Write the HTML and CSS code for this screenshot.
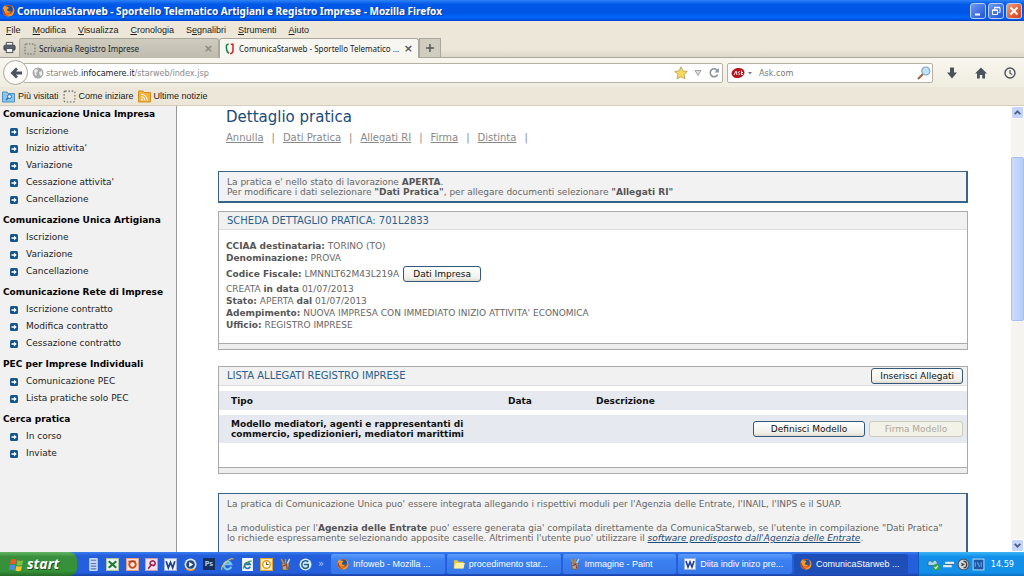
FILE: index.html
```html
<!DOCTYPE html>
<html lang="it">
<head>
<meta charset="utf-8">
<title>ComunicaStarweb - Sportello Telematico Artigiani e Registro Imprese</title>
<link rel="stylesheet" href="styles.css">
</head>
<body>
<svg class="defs" aria-hidden="true">
  <symbol id="fox" viewBox="0 0 16 16"><circle cx="8" cy="8" r="7" fill="#e8641b"/><circle cx="8.500" cy="6.500" r="4.600" fill="#24509e"/><path d="M1 5C2 3 3 2 3.500 1.500L5 3.500C7 3 8 4 8.500 5L6.500 6.500C6 8.500 8 10 11 8.500C10 11.500 6 12 4 9.500C5 14 12 14.500 14 9C14.500 6 13 3 11.500 2C16 4 16.500 10 13 13.500C9 17 2 15 1 10Z" fill="#f79a25"/><path d="M2 6C3 11 5 14 9 14.500C4 15.500 .5 12 1 7Z" fill="#c83a12"/></symbol>
  <symbol id="dots" viewBox="0 0 12 12"><rect x="1" y="1" width="10" height="10" rx="1" fill="none" stroke="#666" stroke-dasharray="1.500 1.500"/></symbol>
  <symbol id="arrow" viewBox="0 0 8 8"><rect width="8" height="8" rx="1.500" fill="#12558f"/><path d="M1.500 3.200H4V1.500L6.700 4L4 6.500V4.800H1.500Z" fill="#fff"/></symbol>
  <symbol id="paint" viewBox="0 0 12 14"><path d="M2 6H10L9 13H3Z" fill="#b9a58a" stroke="#5c4a33" stroke-width=".6"/><path d="M4 6L1.500 1M6 6V1" stroke="#c98b2c" stroke-width="1.600"/><path d="M8 6L10.500 1" stroke="#d9d9d9" stroke-width="1.600"/><path d="M3 9L7 7L8 12" stroke="#8c3526" stroke-width="1.200" fill="none"/></symbol>
  <symbol id="word" viewBox="0 0 12 12"><rect x=".5" y=".5" width="11" height="11" fill="#f4f7ff" stroke="#9db2dc"/><path d="M2 3L4 9L6 4L8 9L10 3" fill="none" stroke="#1f3f94" stroke-width="1.600"/></symbol>
</svg>

<header class="browser">
  <div class="titlebar">
    <svg class="i13"><use href="#fox"/></svg>
    <h1>ComunicaStarweb - Sportello Telematico Artigiani e Registro Imprese - Mozilla Firefox</h1>
    <button class="win" aria-label="Riduci a icona"><svg viewBox="0 0 14 14"><path d="M4 10.500H9" stroke="#fff" stroke-width="2"/></svg></button>
    <button class="win" aria-label="Ripristina"><svg viewBox="0 0 14 14" fill="none" stroke="#fff"><path d="M5.500 5V3.500H11V8.500H9.500"/><path d="M3.500 6H8.500V10.500H3.500Z"/><path d="M5.500 3.500H11M3.500 6.200H8.500" stroke-width="1.500"/></svg></button>
    <button class="win close" aria-label="Chiudi"><svg viewBox="0 0 14 14"><path d="M3.500 3.500L10.500 10.500M10.500 3.500L3.500 10.500" stroke="#fff" stroke-width="1.800"/></svg></button>
  </div>

  <nav class="menubar" aria-label="Menu">
    <button><u>F</u>ile</button><button><u>M</u>odifica</button><button><u>V</u>isualizza</button><button><u>C</u>ronologia</button><button>S<u>e</u>gnalibri</button><button><u>S</u>trumenti</button><button><u>A</u>iuto</button>
  </nav>

  <div class="tabs">
    <button class="print" aria-label="Stampa"><svg viewBox="0 0 14 13"><path d="M3.500 4V1H10.500V4" fill="#f5f5f5" stroke="#444b55"/><rect x="1" y="4" width="12" height="5.500" rx="1.500" fill="#59616c" stroke="#363d46"/><rect x="3.500" y="7.500" width="7" height="4.500" fill="#f5f5f5" stroke="#444b55"/></svg></button>
    <div class="tab">
      <svg class="i12"><use href="#dots"/></svg><span class="tab-name">Scrivania Registro Imprese</span>
      <button class="x" aria-label="Chiudi scheda">×</button>
    </div>
    <div class="tab current">
      <svg class="i12" viewBox="0 0 12 14"><path d="M4.500 1.500C1.500 1 1.500 4 2 7C2.300 10 3.500 11.500 5 12" fill="none" stroke="#16834b" stroke-width="1.800"/><path d="M7 1.500H9.500V8C9.500 11 8 12.500 6 12.500" fill="none" stroke="#d8232e" stroke-width="1.800"/></svg><span class="tab-name">ComunicaStarweb - Sportello Telematico ...</span>
      <button class="x" aria-label="Chiudi scheda">×</button>
    </div>
    <button class="newtab" aria-label="Nuova scheda"><svg viewBox="0 0 10 10"><path d="M5 1V9M1 5H9" stroke="#555" stroke-width="1.500"/></svg></button>
  </div>

  <div class="navbar">
    <button class="back" aria-label="Indietro"><svg viewBox="0 0 14 14"><path d="M7 1.500L1.500 7L7 12.500L9 10.500L7 8.500H13V5.500H7L9 3.500Z" fill="#4a525e"/></svg></button>
    <div class="field url">
      <svg class="i12" viewBox="0 0 12 12"><circle cx="6" cy="6" r="5.500" fill="#a9a9a9"/><path d="M2 3L5 2L6 4L4 6L5 9L3 8ZM7 5L10 4L10 8L8 9Z" fill="#eee"/></svg>
      <label for="address">starweb.<b>infocamere.it</b>/starweb/index.jsp</label>
      <input id="address" type="text">
      <button aria-label="Segnalibro"><svg class="i14" viewBox="0 0 14 14"><path d="M7 .8L8.900 4.900L13.300 5.400L10 8.400L10.900 12.900L7 10.700L3.100 12.900L4 8.400L.7 5.400L5.100 4.900Z" fill="#f8d95c" stroke="#b39b55" stroke-width=".8"/></svg></button>
      <button aria-label="Cronologia indirizzi"><svg class="i8" viewBox="0 0 8 8"><path d="M1 1.500H7L4 6.500Z" fill="#ddd" stroke="#a5a5a5"/></svg></button>
      <button aria-label="Ricarica"><svg class="i12" viewBox="0 0 12 12"><path d="M9.500 3.500A4 4 0 1 0 9.800 7.500" fill="none" stroke="#8c929b" stroke-width="1.600"/><path d="M10.800 1V5.500H6.500Z" fill="#8c929b"/></svg></button>
    </div>
    <div class="field search">
      <button aria-label="Motore di ricerca"><svg class="ask" viewBox="0 0 22 12"><ellipse cx="7" cy="6" rx="6.500" ry="5" fill="#b3151c" transform="rotate(-12 7 6)"/><path d="M3 8L5 4L6 8M9 4.500C7 4.500 7 6 8.200 6.200C9.500 6.500 8.500 8 7.500 7.700M10.500 3.500V8M12 5L10.500 6.500L12 8" fill="none" stroke="#fff" stroke-width=".9"/><path d="M17 5H21L19 7.500Z" fill="#777"/></svg></button>
      <input type="search" placeholder="Ask.com" aria-label="Cerca con Ask.com">
      <button aria-label="Cerca"><svg class="i14" viewBox="0 0 14 14"><path d="M1 13L6 8" stroke="#a0623f" stroke-width="2"/><circle cx="8.800" cy="5" r="4" fill="#bfe3f7" stroke="#7fa3c8" stroke-width="1.200"/></svg></button>
    </div>
    <button class="tool" aria-label="Download"><svg viewBox="0 0 14 14"><path d="M5 1.500H9V6.500H12L7 12.500L2 6.500H5Z" fill="#4a525e"/></svg></button>
    <button class="tool" aria-label="Pagina iniziale"><svg viewBox="0 0 14 14"><path d="M7 1.500L13 7.500H11V12.500H8.200V9H5.800V12.500H3V7.500H1Z" fill="#4a525e"/></svg></button>
    <button class="tool" aria-label="Cronologia"><svg viewBox="0 0 14 14"><circle cx="7" cy="7" r="5" fill="none" stroke="#4a525e" stroke-width="1.400"/><path d="M7 4V7.200L9.200 8.500" fill="none" stroke="#4a525e" stroke-width="1.200"/></svg></button>
  </div>

  <nav class="bookmarks" aria-label="Segnalibri">
    <a href="#"><svg class="i13" viewBox="0 0 13 13"><path d="M.5 2H5L6 3.500H12.500V12H.5Z" fill="#8cc4ee" stroke="#4a8fc5"/><circle cx="7.500" cy="6.500" r="2" fill="#d8effc" stroke="#2a6cab"/><path d="M4 10L6 8" stroke="#2a6cab" stroke-width="1.300"/></svg>Più visitati</a>
    <a href="#"><svg class="i13"><use href="#dots"/></svg>Come iniziare</a>
    <a href="#"><svg class="i13" viewBox="0 0 13 13"><path d="M.5 1H5L6 2.500H12.500V12H.5Z" fill="#f5b33c" stroke="#cf8f25"/><circle cx="4" cy="9.500" r="1" fill="#fff"/><path d="M3 6.500A4 4 0 0 1 7 10.500M3 4.200A6.300 6.300 0 0 1 9.300 10.500" fill="none" stroke="#fff"/></svg>Ultime notizie</a>
  </nav>
</header>

<div class="page">
  <aside class="sidebar">
    <section><h2>Comunicazione Unica Impresa</h2>
      <a href="#"><svg><use href="#arrow"/></svg>Iscrizione</a>
      <a href="#"><svg><use href="#arrow"/></svg>Inizio attivita'</a>
      <a href="#"><svg><use href="#arrow"/></svg>Variazione</a>
      <a href="#"><svg><use href="#arrow"/></svg>Cessazione attivita'</a>
      <a href="#"><svg><use href="#arrow"/></svg>Cancellazione</a></section>
    <section><h2>Comunicazione Unica Artigiana</h2>
      <a href="#"><svg><use href="#arrow"/></svg>Iscrizione</a>
      <a href="#"><svg><use href="#arrow"/></svg>Variazione</a>
      <a href="#"><svg><use href="#arrow"/></svg>Cancellazione</a></section>
    <section><h2>Comunicazione Rete di Imprese</h2>
      <a href="#"><svg><use href="#arrow"/></svg>Iscrizione contratto</a>
      <a href="#"><svg><use href="#arrow"/></svg>Modifica contratto</a>
      <a href="#"><svg><use href="#arrow"/></svg>Cessazione contratto</a></section>
    <section><h2>PEC per Imprese Individuali</h2>
      <a href="#"><svg><use href="#arrow"/></svg>Comunicazione PEC</a>
      <a href="#"><svg><use href="#arrow"/></svg>Lista pratiche solo PEC</a></section>
    <section><h2>Cerca pratica</h2>
      <a href="#"><svg><use href="#arrow"/></svg>In corso</a>
      <a href="#"><svg><use href="#arrow"/></svg>Inviate</a></section>
  </aside>

  <main class="main">
    <h2 class="heading">Dettaglio pratica</h2>
    <nav class="actions" aria-label="Pratica">
      <a href="#">Annulla</a><span>|</span><a href="#">Dati Pratica</a><span>|</span><a href="#">Allegati RI</a><span>|</span><a href="#">Firma</a><span>|</span><a href="#">Distinta</a><span>|</span>
    </nav>

    <div class="notice">
      <p>La pratica e' nello stato di lavorazione <b>APERTA</b>.</p>
      <p>Per modificare i dati selezionare <b>"Dati Pratica"</b>, per allegare documenti selezionare <b>"Allegati RI"</b></p>
    </div>

    <section class="card">
      <div class="card-head"><h3>SCHEDA DETTAGLIO PRATICA: 701L2833</h3></div>
      <div class="details">
        <p><b>CCIAA destinataria:</b> TORINO (TO)</p>
        <p><b>Denominazione:</b> PROVA</p>
        <div class="code"><p><b>Codice Fiscale:</b> LMNNLT62M43L219A</p><button class="btn">Dati Impresa</button></div>
        <p>CREATA <b>in data</b> 01/07/2013</p>
        <p><b>Stato:</b> APERTA <b>dal</b> 01/07/2013</p>
        <p><b>Adempimento:</b> NUOVA IMPRESA CON IMMEDIATO INIZIO ATTIVITA' ECONOMICA</p>
        <p><b>Ufficio:</b> REGISTRO IMPRESE</p>
      </div>
      <div class="card-foot"></div>
    </section>

    <section class="card list">
      <div class="card-head"><h3>LISTA ALLEGATI REGISTRO IMPRESE</h3><button class="btn">Inserisci Allegati</button></div>
      <table>
        <thead><tr><th class="type">Tipo</th><th class="date">Data</th><th>Descrizione</th></tr></thead>
        <tbody><tr><td class="type">Modello mediatori, agenti e rappresentanti di commercio, spedizionieri, mediatori marittimi</td><td class="date"></td><td><div class="row-actions"><button class="btn wide">Definisci Modello</button><button class="btn" disabled>Firma Modello</button></div></td></tr></tbody>
      </table>
      <div class="card-foot"></div>
    </section>

    <div class="notice info">
      <p>La pratica di Comunicazione Unica puo' essere integrata allegando i rispettivi moduli per l'Agenzia delle Entrate, l'INAIL, l'INPS e il SUAP.</p>
      <p>La modulistica per l'<b>Agenzia delle Entrate</b> puo' essere generata gia' compilata direttamente da ComunicaStarweb, se l'utente in compilazione "Dati Pratica"<br>lo richiede espressamente selezionando apposite caselle. Altrimenti l'utente puo' utilizzare il <a href="#">software predisposto dall'Agenzia delle Entrate</a>.</p>
    </div>
  </main>

  <div class="scroll">
    <button aria-label="Scorri su"><svg viewBox="0 0 8 8"><path d="M1.500 5.500L4 3L6.500 5.500" fill="none" stroke="#4d6185" stroke-width="1.600"/></svg></button>
    <div class="track"><div class="thumb"></div></div>
    <button aria-label="Scorri giù"><svg viewBox="0 0 8 8"><path d="M1.500 2.500L4 5L6.500 2.500" fill="none" stroke="#4d6185" stroke-width="1.600"/></svg></button>
  </div>
</div>

<footer class="taskbar">
  <button class="start"><svg viewBox="0 0 16 16"><path d="M2 3C4 2 6 2 8 3L7 8C5 7 3 7 1 8Z" fill="#f0592a"/><path d="M9 3.500C11 4.500 13 4.500 15 3.500L14 8.500C12 9.500 10 9.500 8 8.500Z" fill="#7fc241"/><path d="M.8 9C3 8 5 8 6.800 9L5.800 14C4 13 2 13 0 14Z" fill="#4b8fe8"/><path d="M7.800 9.500C10 10.500 12 10.500 13.800 9.500L12.800 14.500C11 15.500 9 15.500 6.800 14.500Z" fill="#fbc62d"/></svg>start</button>
  <div class="quick">
    <svg viewBox="0 0 12 12"><rect x="2" y="0" width="8" height="12" rx="1" fill="#c5d7f3"/><path d="M3.500 2H8.500M3.500 5H8.500M3.500 7.500H8.500M3.500 10H8.500" stroke="#5877ae"/></svg>
    <svg viewBox="0 0 12 12"><rect x=".5" y=".5" width="11" height="11" fill="#f0f5ec" stroke="#a9c5a0"/><path d="M2.500 3L9.500 9M9.500 3L2.500 9" stroke="#1f7a35" stroke-width="2"/></svg>
    <svg viewBox="0 0 12 12"><rect x=".5" y=".5" width="11" height="11" fill="#fbe9dd" stroke="#e6a183"/><circle cx="6" cy="6" r="3" fill="none" stroke="#cd4d20" stroke-width="1.800"/><path d="M2 3H9" stroke="#b33b14"/></svg>
    <svg viewBox="0 0 12 12"><rect x=".5" y=".5" width="11" height="11" fill="#f6e3ea" stroke="#cf9bb0"/><path d="M3 10L6 6M5 6A2.300 2.300 0 1 1 8 7Z" fill="none" stroke="#9c2450" stroke-width="1.500"/></svg>
    <svg><use href="#word"/></svg>
    <svg viewBox="0 0 12 12"><circle cx="6" cy="6" r="5.500" fill="#dfe8f4"/><circle cx="6" cy="6" r="4" fill="#27477c"/><path d="M4.800 3.800L8.500 6L4.800 8.200Z" fill="#fff"/><path d="M2 10A6 6 0 0 0 10 10" stroke="#ef9331" stroke-width="1.300" fill="none"/></svg>
    <span class="ps">Ps</span>
    <svg viewBox="0 0 12 12"><path d="M9.500 8A3.500 3.500 0 1 1 9.500 5.800H3.500" fill="none" stroke="#6fc5f7" stroke-width="2"/><path d="M1 11C-1 8 8-1 11.500 1" fill="none" stroke="#f6c945"/></svg>
    <svg viewBox="0 0 12 12"><rect x="1" width="10" height="12" fill="#f4f8fd"/><path d="M8.500 8A2.700 2.700 0 1 1 8.500 6H4" fill="none" stroke="#2670bd" stroke-width="1.500"/><path d="M2 10C2 7 7 2 10 3" stroke="#4a9b43" fill="none"/></svg>
    <svg viewBox="0 0 12 12"><rect x=".5" y=".5" width="11" height="11" fill="#fff0bd" stroke="#e2a62e"/><circle cx="6" cy="6" r="3.500" fill="#fffbe8" stroke="#df9a1f" stroke-width="1.300"/><path d="M6 4V6H8" stroke="#80561a" fill="none"/></svg>
    <svg><use href="#paint"/></svg>
    <svg viewBox="0 0 12 12"><circle cx="6" cy="6" r="5.500" fill="#d9edfb"/><path d="M8.500 3.500A3.500 3.500 0 1 0 9 8M4.500 6H8.500V8.500" fill="none" stroke="#27628f" stroke-width="1.500"/></svg>
    <span class="more">»</span>
  </div>
  <div class="tasks">
    <button><svg><use href="#fox"/></svg>Infoweb - Mozilla ...</button>
    <button><svg viewBox="0 0 13 12"><path d="M1 2H5L6 3.500H11.500V10.500H1Z" fill="#e8c64b"/><path d="M3 5H12.800L11.300 10.800H1Z" fill="#fff1a2"/></svg>procedimento star...</button>
    <button><svg><use href="#paint"/></svg>Immagine - Paint</button>
    <button><svg><use href="#word"/></svg>Diita indiv inizo pre...</button>
    <button class="pressed"><svg><use href="#fox"/></svg>ComunicaStarweb ...</button>
  </div>
  <div class="tray">
    <svg viewBox="0 0 12 12"><path d="M1 7C0 3 3 1 5 4C7 0 11 3 9 7Z" fill="#a9d6ee" stroke="#31638b" stroke-width=".8"/><circle cx="8.500" cy="8.500" r="3" fill="#35a63b"/><path d="M7 8.500L8.200 9.700L10 7.200" stroke="#fff" fill="none"/></svg>
    <svg viewBox="0 0 12 12"><path d="M3 4.500H11M1 7.500H9" stroke="#dfeaf2" stroke-width="2"/><path d="M3 6H10" stroke="#426c8b"/></svg>
    <svg viewBox="0 0 12 12"><circle cx="6" cy="6" r="5" fill="#d6d6d6" stroke="#4d5660"/><path d="M6 3A3 3 0 0 1 6 9M4 5L6 6L4 7" stroke="#39424c" stroke-width="1.300" fill="none"/></svg>
    <svg viewBox="0 0 12 12"><rect x="1" y="1" width="10" height="10" fill="#1d57a5" stroke="#a9d4f3"/><path d="M3 4V8M5 4L7 8M8.500 4V8" stroke="#66a9e4"/></svg>
    <time>14.59</time>
  </div>
</footer>
</body>
</html>
```
FILE: styles.css
```css
* { box-sizing: border-box; }
html, body { height: 100%; }
body { margin: 0; display: flex; flex-direction: column; overflow: hidden; background: #fff; color: #222; font: 9px/12px "DejaVu Sans Condensed", "DejaVu Sans", sans-serif; }
h1, h2, h3, p { margin: 0; font-size: inherit; }
button { font: inherit; color: inherit; background: none; border: 0; padding: 0; margin: 0; }
input { font: inherit; border: 0; padding: 0; background: none; min-width: 0; outline: 0; }
svg { display: block; flex: none; }
.defs { position: absolute; width: 0; height: 0; }
.i8 { width: 8px; height: 8px; }
.i12 { width: 12px; height: 12px; }
.i13 { width: 13px; height: 13px; }
.i14 { width: 14px; height: 14px; }

.browser { flex: none; background: #ece7d8; }
.titlebar { display: flex; align-items: center; gap: 2px; height: 21px; padding: 0 2px; background: linear-gradient(#2f83f5 0, #0058e6 20%, #0055e5 60%, #0066ff 85%, #0040c0 100%); }
.titlebar h1 { flex: 1; font: bold 10px/14px "Noto Sans", sans-serif; color: #fff; white-space: nowrap; text-shadow: 1px 1px #0a3a9a; }
.win { width: 16px; height: 16px; border: 1px solid #b9cdf5; border-radius: 3px; background: linear-gradient(135deg, #6e9bf3, #1e52d4); }
.win.close { background: linear-gradient(135deg, #f09a7a, #d23c12); }
.menubar { display: flex; align-items: center; gap: 12px; height: 17px; padding: 0 6px; font: 9px/12px "Liberation Sans", sans-serif; }
.tabs { display: flex; height: 20px; border-bottom: 1px solid #aaa89e; background: linear-gradient(#ece7d8 60%, #dcd7c8); }
.print { width: 19px; padding-left: 3px; }
.print svg { width: 13px; height: 13px; }
.tab { display: flex; align-items: center; gap: 3px; flex: 0 1 200px; min-width: 0; height: 20px; padding: 0 5px 0 4px; border: 1px solid #aaa89e; border-bottom: 0; border-radius: 3px 3px 0 0; background: linear-gradient(#cfcbbd, #bfbbae); }
.tab.current { background: #f8f6f0; }
.tab-name { flex: 1; min-width: 0; font: 8px/12px "Noto Sans", sans-serif; white-space: nowrap; }
.x { font: bold 11px/12px "DejaVu Sans", sans-serif; color: #8a877c; }
.current .x { color: #555; }
.newtab { display: grid; place-items: center; width: 22px; border: 1px solid #aaa89e; border-bottom: 0; background: #d0ccbf; }
.newtab svg { width: 10px; height: 10px; }
.navbar { display: flex; align-items: center; height: 29px; padding: 0 4px 0 3px; background: linear-gradient(#f8f6ee, #f0eee0); }
.back { z-index: 1; display: grid; place-items: center; width: 25px; height: 25px; border: 1px solid #aaa89e; border-radius: 50%; background: #fcfbf7; }
.back svg { width: 14px; height: 14px; }
.field { display: flex; align-items: center; gap: 6px; height: 20px; border: 1px solid #b5b1a4; border-radius: 2px; background: #fff; }
.field input { flex: 1; color: #777; }
.url { flex: 1; margin-left: -5px; padding: 0 2px 0 8px; color: #888; }
.url label { margin-left: -4px; }
.url b { color: #222; font-weight: normal; }
.search { width: 206px; margin-left: 4px; padding: 0 1px 0 3px; }
.search input::placeholder { color: #777; opacity: 1; }
.ask { width: 22px; height: 12px; }
.tool { width: 20px; margin-left: 9px; }
.tool svg { width: 14px; height: 14px; margin: auto; }
.bookmarks { display: flex; align-items: center; gap: 4px; height: 19px; padding: 0 2px; border-bottom: 1px solid #d5cdb8; font: 9px/12px "Liberation Sans", sans-serif; }
.bookmarks a { display: flex; align-items: center; gap: 3px; color: #222; text-decoration: none; }

.page { flex: 1; min-height: 0; display: flex; overflow: hidden; font: 9px/12px "DejaVu Sans", sans-serif; }
.sidebar { flex: none; display: flex; flex-direction: column; gap: 4px; width: 177px; border-right: 1px solid #999; background: #f1f1f1; color: #111; }
.sidebar h2 { padding-left: 3px; font: bold 9px/17px "DejaVu Sans", sans-serif; color: #000; }
.sidebar a { display: flex; align-items: center; gap: 8px; padding-left: 10px; line-height: 17px; color: #222; text-decoration: none; }
.sidebar svg { width: 8px; height: 8px; }
.main { flex: 1; min-width: 0; padding: 1px 43px 0 41px; color: #666; }
.main b { color: #555; }
.heading { padding-left: 8px; font: 15px/20px "DejaVu Sans", sans-serif; color: #1b4a78; }
.actions { display: flex; gap: 8px; padding: 4px 8px 0; font-size: 10px; line-height: 14px; color: #888; }
.actions a { color: #888; }
.notice { margin-top: 26px; padding: 5px 8px 4px; border: 1px solid #36648b; border-right-width: 2px; border-bottom-width: 2px; background: #f2f2f2; line-height: 10px; }
.card { margin-top: 8px; border: 1px solid #aaa; }
.card-head { display: flex; align-items: center; justify-content: space-between; min-height: 18px; padding: 0 4px 0 8px; border-bottom: 1px solid #ddd; background: #f1f1f1; }
.card h3 { font: 10px/14px "DejaVu Sans", sans-serif; color: #2b5f8c; }
.details { padding: 10px 7px 12px; }
.code { display: flex; align-items: center; gap: 4px; height: 19px; }
.card-foot { height: 6px; border-top: 1px solid #aaa; background: #eee; }
.btn { min-width: 78px; height: 16px; padding: 0 8px; border: 1px solid #33587c; border-radius: 3px; background: linear-gradient(#fff, #f0efe8 80%, #dcd8cc); font: 9px/12px "DejaVu Sans", sans-serif; color: #111; white-space: nowrap; }
.btn.wide { min-width: 112px; }
.btn:disabled { min-width: 94px; border-color: #cfccba; background: #f3f2e8; color: #aaa899; }
.list { margin-top: 16px; }
.list .card-head { min-height: 19px; }
table { width: 100%; border-spacing: 0 5px; table-layout: fixed; margin-bottom: 19px; color: #111; }
th, td { padding: 0 4px 0 8px; background: #e6e9f0; text-align: left; font-weight: bold; }
th { height: 19px; }
td { height: 28px; line-height: 10px; }
.type { width: 281px; padding-left: 12px; }
.date { width: 88px; }
.row-actions { display: flex; justify-content: flex-end; gap: 4px; }
.info { margin-top: 19px; display: grid; gap: 14px; padding-bottom: 12px; }
.info a { color: #1b4a78; font-style: italic; }
.scroll { flex: none; display: flex; flex-direction: column; width: 13px; background: #f5f4f0; }
.scroll button { display: grid; place-items: center; height: 13px; border: 1px solid #fff; border-radius: 2px; background: #c5d5fb; }
.scroll svg { width: 9px; height: 9px; }
.track { flex: 1; padding-top: 38px; }
.thumb { height: 43%; border: 1px solid #a9bff0; border-radius: 2px; background: linear-gradient(90deg, #cddbfd, #b8cbfa); }

.taskbar { flex: none; display: flex; align-items: stretch; height: 24px; background: linear-gradient(#3a80f2 0, #245edb 15%, #2460dd 85%, #1941a5 100%); color: #fff; }
.start { display: flex; align-items: center; gap: 3px; width: 77px; padding-left: 9px; border-radius: 0 8px 8px 0; background: linear-gradient(#63b763 0, #388e3c 20%, #359338 80%, #256b28 100%); font: italic bold 14px/20px "Open Sans", sans-serif; text-shadow: 1px 1px #1f4d20; }
.start svg { width: 15px; height: 15px; }
.quick { display: flex; align-items: center; justify-content: space-between; width: 250px; padding: 0 3px 0 10px; }
.quick svg, .tray svg { width: 13px; height: 13px; }
.ps { width: 12px; background: #15305f; color: #a9cdf2; font-size: 7px; font-weight: bold; text-align: center; }
.more { color: #a9c8ff; font-size: 11px; }
.tasks { flex: 1; min-width: 0; display: flex; gap: 2px; padding: 2px 10px 2px 4px; }
.tasks button { flex: 1; min-width: 0; display: flex; align-items: center; gap: 4px; padding: 0 6px; border-radius: 2px; background: linear-gradient(#5a9bfa, #3c81f3 30%, #3676e8); font: 9px/12px "Liberation Sans", sans-serif; white-space: nowrap; overflow: hidden; }
.tasks .pressed { background: #1e4fb8; }
.tasks svg { width: 12px; height: 12px; }
.tray { display: flex; align-items: center; gap: 2px; padding: 0 10px 0 8px; border-left: 1px solid #0c59b9; background: linear-gradient(#3cb5f2, #1290e9 20%, #1290e9 85%, #0d6fc0); }
.tray time { margin-left: 4px; }
```
